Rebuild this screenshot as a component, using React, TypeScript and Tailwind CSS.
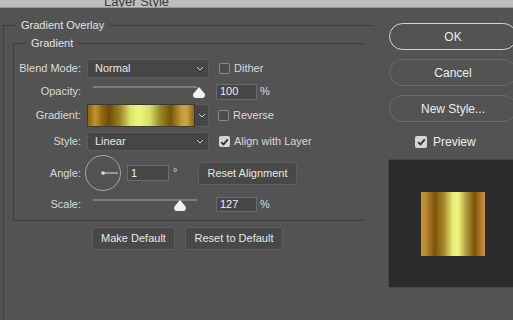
import React from "react";

const swatchGradient =
  "bg-[linear-gradient(90deg,#8c6510_0%,#c3922e_7%,#8a6410_14%,#6e4e04_20%,#9a8424_30%,#dce46a_40%,#eef67c_48%,#d8e06a_58%,#9a8a28_68%,#765406_78%,#c39a3a_88%,#d0a444_93%,#8c6510_100%)]";

const previewGradient =
  "bg-[linear-gradient(90deg,#c8963a_0%,#b8862c_8%,#7a5408_22%,#a88a2a_36%,#e8f07a_50%,#eef67e_58%,#b0a040_70%,#7a5408_84%,#a87820_92%,#c8963a_100%)]";

function Chevron() {
  return (
    <svg width="8" height="5" viewBox="0 0 8 5">
      <path d="M1 1 L4 4 L7 1" fill="none" stroke="#cfcfcf" strokeWidth="1" />
    </svg>
  );
}

function Thumb() {
  return (
    <svg width="12" height="11" viewBox="0 0 12 11">
      <path
        d="M6 0 L11.2 6 Q12 7 12 8 Q12 11 9 11 L3 11 Q0 11 0 8 Q0 7 0.8 6 Z"
        fill="#f2f2f2"
      />
    </svg>
  );
}

function Checkbox({ checked, size = "small" }: { checked?: boolean; size?: "small" | "large" }) {
  const box = size === "large" ? "w-[12px] h-[12px]" : "w-[11px] h-[11px]";
  if (checked) {
    return (
      <div className={`${box} rounded-[2px] bg-[#d6d6d6] flex items-center justify-center shrink-0`}>
        <svg width="9" height="8" viewBox="0 0 9 8">
          <path d="M1.2 4.2 L3.5 6.4 L7.8 1.4" fill="none" stroke="#303030" strokeWidth="1.8" />
        </svg>
      </div>
    );
  }
  return <div className={`${box} rounded-[2px] border border-[#8a8a8a] bg-[#4b4b4b] shrink-0`} />;
}

function Label({ text, className = "mr-[6px]" }: { text: string; className?: string }) {
  return <div className={`w-[67px] text-right shrink-0 ${className}`}>{text}</div>;
}

function Select({ value }: { value: string }) {
  return (
    <div className="w-[122px] h-full bg-[#464646] border border-[#5c5c5c] rounded-[3px] flex items-center justify-between pl-[7px] pr-[4px] text-[#e6e6e6]">
      <span>{value}</span>
      <Chevron />
    </div>
  );
}

function NumberInput({ value, size }: { value: string; size: string }) {
  return (
    <div className={`${size} bg-[#474747] border border-[#6a6a6a] flex items-center pl-[3px] text-[#ececec] shrink-0`}>
      {value}
    </div>
  );
}

function Slider({ thumbLeft, top }: { thumbLeft: string; top: string }) {
  return (
    <div className="w-[122px] h-full relative shrink-0">
      <div className="absolute left-[6px] w-[104px] h-[2px] bg-[#7c7c7c]" style={{ top }} />
      <div className={`absolute ${thumbLeft}`} style={{ top: `calc(${top} + 1px)` }}>
        <Thumb />
      </div>
    </div>
  );
}

function SmallButton({ text, className = "" }: { text: string; className?: string }) {
  return (
    <div className={`h-[23px] bg-[#484848] border border-[#5f5f5f] rounded-[3px] flex items-center justify-center text-[#e6e6e6] ${className}`}>
      {text}
    </div>
  );
}

function PillButton({ text, primary }: { text: string; primary?: boolean }) {
  return (
    <div
      className={`w-[128px] h-[27px] rounded-full flex items-center justify-center text-[12px] text-[#ededed] ${
        primary ? "border-[1.5px] border-[#d4d4d4]" : "border border-[#6c6c6c]"
      }`}
    >
      {text}
    </div>
  );
}

export default function App() {
  return (
    <div className="w-[513px] h-[320px] bg-[#535353] overflow-hidden flex flex-col font-['Liberation_Sans',Arial,sans-serif] text-[11px] text-[#d9d9d9]">
      <div className="h-[8px] shrink-0 bg-[#bebebe] border-b border-[#9a9a9a] overflow-hidden">
        <div className="mt-[-6px] pl-[104px] text-[13px] leading-[16px] text-[#3a3a3a]">Layer Style</div>
      </div>

      <div className="flex flex-1">
        {/* left: settings */}
        <div className="w-[389px] shrink-0">
          <fieldset className="mt-[10px] ml-[3px] w-[371px] h-[302px] border-t border-l border-[#3e3e3e]">
            <legend className="ml-[12px] px-[5px] leading-[14px] text-[#e2e2e2]">Gradient Overlay</legend>

            <fieldset className="mt-[4px] ml-[9px] w-[351px] border-t border-l border-b border-[#3e3e3e] pb-[8px]">
              <legend className="ml-[12px] px-[5px] leading-[14px] text-[#e2e2e2]">Gradient</legend>

              <div className="flex items-center h-[19px] mt-[9px]">
                <Label text="Blend Mode:" />
                <Select value="Normal" />
                <div className="ml-[10px] flex items-center gap-[4px]">
                  <Checkbox />
                  <span>Dither</span>
                </div>
              </div>

              <div className="flex items-center h-[17px] mt-[5px]">
                <Label text="Opacity:" />
                <Slider thumbLeft="left-[106px]" top="3px" />
                <div className="ml-[7px]">
                  <NumberInput value="100" size="w-[41px] h-[16px]" />
                </div>
                <span className="ml-[3px]">%</span>
              </div>

              <div className="flex items-center h-[23px] mt-[4px]">
                <Label text="Gradient:" />
                <div className={`w-[108px] h-full border border-[#3a3a3a] ${swatchGradient}`} />
                <div className="w-[14px] h-full bg-[#464646] border border-[#5c5c5c] border-l-0 rounded-r-[3px] flex items-center justify-center">
                  <Chevron />
                </div>
                <div className="ml-[9px] flex items-center gap-[4px]">
                  <Checkbox />
                  <span>Reverse</span>
                </div>
              </div>

              <div className="flex items-center h-[19px] mt-[5px]">
                <Label text="Style:" />
                <Select value="Linear" />
                <div className="ml-[10px] flex items-center gap-[4px]">
                  <Checkbox checked />
                  <span>Align with Layer</span>
                </div>
              </div>

              <div className="flex items-center h-[36px] mt-[4px]">
                <Label text="Angle:" className="mr-[4px]" />
                <svg width="36" height="36" viewBox="0 0 36 36" className="shrink-0">
                  <circle cx="18" cy="18" r="17.5" fill="none" stroke="#a6a6a6" strokeWidth="1" />
                  <circle cx="18" cy="18" r="1.8" fill="#dcdcdc" />
                  <line x1="18" y1="18" x2="33" y2="18" stroke="#dcdcdc" strokeWidth="1" />
                </svg>
                <div className="ml-[6px]">
                  <NumberInput value="1" size="w-[42px] h-[16px]" />
                </div>
                <span className="ml-[4px] w-[25px] self-start mt-[12px] leading-[10px]">°</span>
                <SmallButton text="Reset Alignment" className="w-[99px]" />
              </div>

              <div className="flex items-center h-[15px] mt-[6px]">
                <Label text="Scale:" />
                <Slider thumbLeft="left-[87px]" top="2px" />
                <div className="ml-[7px]">
                  <NumberInput value="127" size="w-[41px] h-[15px]" />
                </div>
                <span className="ml-[3px]">%</span>
              </div>
            </fieldset>

            <div className="flex mt-[6px] ml-[88px] gap-[10px]">
              <SmallButton text="Make Default" className="w-[83px]" />
              <SmallButton text="Reset to Default" className="w-[98px]" />
            </div>
          </fieldset>
        </div>

        {/* right: actions and preview */}
        <div className="w-[128px] shrink-0 flex flex-col pt-[15px]">
          <PillButton text="OK" primary />
          <div className="mt-[9px]">
            <PillButton text="Cancel" />
          </div>
          <div className="mt-[9px]">
            <PillButton text="New Style..." />
          </div>
          <div className="mt-[14px] ml-[26px] flex items-center gap-[6px] h-[12px] text-[12px] text-[#ededed]">
            <Checkbox checked size="large" />
            <span>Preview</span>
          </div>
          <div className="mt-[11px] ml-[-1px] w-[130px] h-[129px] shrink-0 bg-[#2b2b2b] border border-[#474747] flex items-center justify-center">
            <div className={`w-[64px] h-[64px] ${previewGradient}`} />
          </div>
        </div>
      </div>
    </div>
  );
}
